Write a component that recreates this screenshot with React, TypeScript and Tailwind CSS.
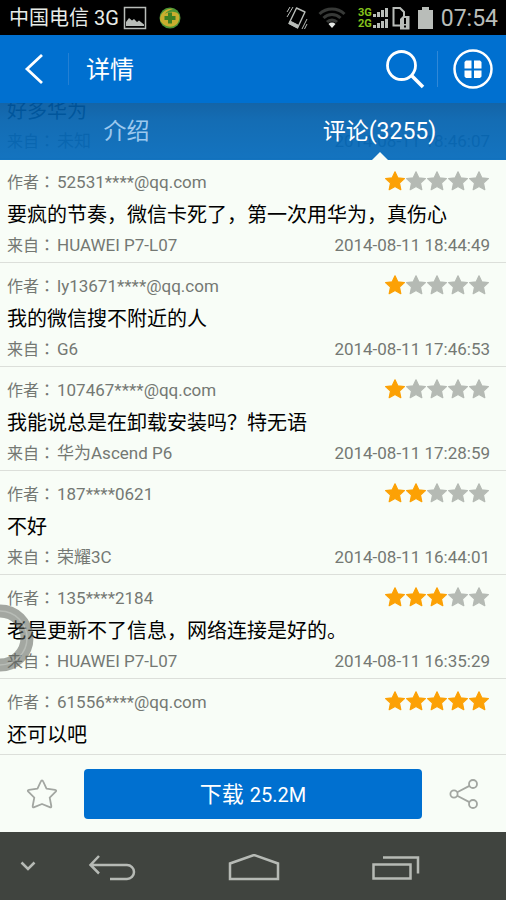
import { useState } from 'react';

interface Comment {
  author?: string;
  text: string;
  device?: string;
  time?: string;
  stars?: number;
}

const comments: Comment[] = [
  { text: '好多华为', device: '未知', time: '2014-08-11 18:46:07' },
  { author: '52531****@qq.com', text: '要疯的节奏，微信卡死了，第一次用华为，真伤心', device: 'HUAWEI P7-L07', time: '2014-08-11 18:44:49', stars: 1 },
  { author: 'ly13671****@qq.com', text: '我的微信搜不附近的人', device: 'G6', time: '2014-08-11 17:46:53', stars: 1 },
  { author: '107467****@qq.com', text: '我能说总是在卸载安装吗？特无语', device: '华为Ascend P6', time: '2014-08-11 17:28:59', stars: 1 },
  { author: '187****0621', text: '不好', device: '荣耀3C', time: '2014-08-11 16:44:01', stars: 2 },
  { author: '135****2184', text: '老是更新不了信息，网络连接是好的。', device: 'HUAWEI P7-L07', time: '2014-08-11 16:35:29', stars: 3 },
  { author: '61556****@qq.com', text: '还可以吧', stars: 5 },
];

const STAR = 'M10 0.8l2.8 6 6.6.8-4.9 4.5 1.3 6.6L10 15.5l-5.8 3.2 1.3-6.6L.6 7.6l6.6-.8z';

function Stars({ count }: { count: number }) {
  return (
    <div className="mr-px mb-0.5 flex gap-px" role="img" aria-label={`${count} / 5`}>
      {[1, 2, 3, 4, 5].map((n) => (
        <svg key={n} viewBox="0 0 20 20" className={n <= count ? 'size-5 text-[#fca105]' : 'size-5 text-[#b5bab4]'}>
          <path d={STAR} fill="currentColor" stroke="currentColor" strokeWidth="1.2" strokeLinejoin="round" />
        </svg>
      ))}
    </div>
  );
}

function Label({ children }: { children: string }) {
  return <span className="mr-0.5 font-['Noto_Sans_CJK_TC',sans-serif] text-base leading-none">{children}</span>;
}

function CommentRow({ comment }: { comment: Comment }) {
  return (
    <li className="border-b border-[#dcdfda] pr-4 pb-1.5 pl-[7px] text-[17px] text-[#747873]">
      {comment.author && (
        <div className="flex h-9 items-center justify-between pt-2.5">
          <p className="leading-6">
            <Label>作者：</Label>
            {comment.author}
          </p>
          <Stars count={comment.stars ?? 0} />
        </div>
      )}
      <p className="truncate text-xl leading-10 text-black">{comment.text}</p>
      {comment.time && (
        <div className="flex justify-between leading-[21px]">
          <p>
            <Label>来自：</Label>
            {comment.device}
          </p>
          <time>{comment.time}</time>
        </div>
      )}
    </li>
  );
}

function StatusBar() {
  return (
    <div className="flex h-[35px] shrink-0 items-center justify-between bg-black pr-2 pl-[9px] text-[#b9bdb9]">
      <div className="flex items-center">
        <span className="text-xl leading-none text-[#e8ece8]">中国电信 3G</span>
        <svg viewBox="0 0 24 24" className="ml-1 size-6" fill="none">
          <rect x="1.5" y="1.5" width="21" height="21" stroke="currentColor" strokeWidth="1.5" />
          <path d="M3 20v-4l3-4 3 2.500 2-1.500 3 3 2-1.500 5 4v1.500z" fill="currentColor" />
        </svg>
        <svg viewBox="0 0 22 22" className="ml-3 size-[22px]">
          <circle cx="11" cy="11" r="10.5" fill="#4a9436" />
          <path d="M1 13C1 5 8 1 14 2c-4 1-7 3-8 5 4-3 12-3 14 1 1 3 0 6-2 9-4 4-13 4-17-4z" fill="#c9ae2e" />
          <path d="M9 5.500h4v3.500h3.500v4H13v3.500H9V13H5.500V9H9z" fill="#3c8022" />
        </svg>
      </div>
      <div className="flex items-center">
        <svg viewBox="0 0 22 24" className="h-6 w-[22px]" fill="none" stroke="currentColor">
          <path d="M10.500 2l8.500 4-7.500 16L3 17.500z" strokeWidth="1.4" strokeLinejoin="round" />
          <path d="M3 17.500l8.500 4.300 1-2.500-8.300-4.200z" fill="currentColor" />
          <path d="M7 1L1 11M4 1L1 6M21 13l-5 10M21 18l-2.500 5" strokeWidth="1" />
        </svg>
        <svg viewBox="0 0 28 22" className="ml-2.5 h-[22px] w-7" fill="none" stroke="#373937" strokeWidth="3">
          <path d="M1.500 7a18 18 0 0 1 25 0M5.500 11a12 12 0 0 1 17 0M9 15a7 7 0 0 1 10 0" />
          <path d="M14 21l-3.500-4a5 5 0 0 1 7 0z" fill="#e4e7e4" stroke="none" />
        </svg>
        <div className="ml-3 flex flex-col text-[11px] leading-[11px] font-bold text-[#84c21c]">
          <span>3G</span>
          <span>2G</span>
        </div>
        <svg viewBox="0 0 16 22" className="h-[22px] w-4" fill="currentColor">
          <path d="M1 7h3v3H1zM5 5h3v5H5zM9 3h3v7H9zM13 1h3v9h-3zM1 18h3v3H1zM5 16h3v5H5zM9 14h3v7H9zM13 12h3v9h-3z" />
        </svg>
        <svg viewBox="0 0 18 24" className="ml-1 h-6 w-[18px]" fill="none">
          <path d="M8 19.500H1.500V2H8l4 4v4" stroke="currentColor" strokeWidth="2" />
          <path d="M8 13l3-3h6.500v13.500H8z" fill="currentColor" />
          <path d="M13 12v6M13 19.500v2" stroke="#000" strokeWidth="2" />
        </svg>
        <svg viewBox="0 0 15 22" className="ml-2 h-[22px] w-[15px]" fill="currentColor">
          <path d="M0 3h4V0h7v3h4v19H0z" />
        </svg>
        <span className="ml-2 pt-0.5 text-[23px] leading-none">07:54</span>
      </div>
    </div>
  );
}

function Header() {
  return (
    <header className="flex h-[68px] shrink-0 items-center justify-between bg-[#0070d0] px-3 text-white">
      <div className="flex items-center">
        <button aria-label="返回" className="flex w-11 justify-center">
          <svg viewBox="0 0 20 32" className="h-8 w-5" fill="none" stroke="currentColor" strokeWidth="2.800">
            <path d="M18 2L3 16l15 14" />
          </svg>
        </button>
        <span className="ml-3 h-8 w-px bg-[#2380d4]" />
        <h1 className="ml-[17px] pt-0.5 text-2xl">详情</h1>
      </div>
      <div className="flex items-center">
        <button aria-label="搜索">
          <svg viewBox="0 0 40 40" className="size-10" fill="none" stroke="currentColor" strokeWidth="2.800">
            <circle cx="16.500" cy="16.500" r="14" />
            <path d="M26.500 26.500L38 38" strokeWidth="3.500" />
          </svg>
        </button>
        <span className="ml-3 h-9 w-px bg-[#2f88d8]" />
        <button aria-label="菜单" className="ml-3.5">
          <svg viewBox="0 0 42 42" className="size-[42px]">
            <circle cx="21" cy="21" r="18.500" fill="none" stroke="currentColor" strokeWidth="2.500" />
            <path
              d="M14 12.500h5.500v8h-7v-6.500zM22 12.500h6l1.500 1.500v6.500H22zM12.500 22.500h7V30H14l-1.500-1.500zM22 22.500h7.500v6L28 30h-6z"
              fill="currentColor"
            />
          </svg>
        </button>
      </div>
    </header>
  );
}

const tabs = ['介绍', '评论(3255)'];

function Tabs() {
  const [active, setActive] = useState(1);
  return (
    <nav className="absolute inset-x-0 top-0 z-10 grid h-[57px] grid-cols-2 bg-linear-to-b from-[#0057a0]/92 via-[#0060ae]/92 via-30% to-[#0068bb]/92">
      {tabs.map((tab, i) => (
        <button
          key={tab}
          onClick={() => setActive(i)}
          className={i === active ? 'relative pt-0.5 text-[23px] text-white' : 'relative pt-0.5 text-[23px] text-[#9cc8ee]'}
        >
          {tab}
          {i === active && (
            <svg viewBox="0 0 16 8" className="absolute bottom-0 left-1/2 h-2 w-4 -translate-x-1/2">
              <path d="M0 8l8-8 8 8z" fill="#f8fdf7" />
            </svg>
          )}
        </button>
      ))}
    </nav>
  );
}

function ActionBar() {
  return (
    <div className="flex h-[78px] shrink-0 items-center border-t border-[#dcdfda] bg-[#f8fdf7] text-[#a2a6a1]">
      <button aria-label="收藏" className="flex w-[84px] justify-center">
        <svg viewBox="0 0 32 32" className="size-8" fill="none" stroke="currentColor" strokeWidth="1.800" strokeLinejoin="round">
          <path d="M16 2.500q.8 0 1.200 1l3.300 7.200 8.500 1.100q2 .4.700 1.900l-6 5.900 1.600 8.400q.2 2-1.600 1.200L16 26l-7.700 3.200q-1.800.8-1.600-1.200l1.600-8.400-6-5.900Q1 12.200 3 11.800l8.500-1.100 3.300-7.200q.4-1 1.200-1z" />
        </svg>
      </button>
      <button className="flex h-[50px] flex-1 items-center justify-center gap-1.5 rounded-sm bg-[#0070d0] pt-0.5 text-[22px] text-white">
        下载 <span className="text-xl">25.2M</span>
      </button>
      <button aria-label="分享" className="flex w-[84px] justify-center">
        <svg viewBox="0 0 32 32" className="size-8" fill="none" stroke="currentColor" strokeWidth="1.800">
          <circle cx="6" cy="16" r="3.600" />
          <circle cx="25" cy="6" r="4" />
          <circle cx="25" cy="26" r="4" />
          <path d="M9.200 14.300L21.400 7.900M9.200 17.700l12.200 6.400" />
        </svg>
      </button>
    </div>
  );
}

function NavBar() {
  return (
    <div className="flex h-[68px] shrink-0 items-center bg-[#40443f] text-[#b6bab5]">
      <button aria-label="收起" className="flex w-14 justify-center">
        <svg viewBox="0 0 16 10" className="h-2.5 w-4" fill="none" stroke="currentColor" strokeWidth="2.500">
          <path d="M1.500 1.500L8 8l6.500-6.500" />
        </svg>
      </button>
      <div className="flex flex-1 justify-between pt-1 pr-[86px] pl-8">
        <button aria-label="后退">
          <svg viewBox="0 0 48 28" className="h-7 w-12" fill="none" stroke="currentColor" strokeWidth="2.500">
            <path d="M11 2L2.500 11 11 19.500M2.500 11H39a7 7 0 0 1 0 14H22" />
          </svg>
        </button>
        <button aria-label="主页">
          <svg viewBox="0 0 52 28" className="h-7 w-[52px]" fill="none" stroke="currentColor" strokeWidth="2.500">
            <path d="M2 25V9.500L26 1l24 8.500V25z" />
          </svg>
        </button>
        <button aria-label="最近任务">
          <svg viewBox="0 0 48 28" className="h-7 w-12" fill="none" stroke="currentColor" strokeWidth="2.500">
            <path d="M1.500 10.500h37v14h-37zM11 3.500h35v16" />
          </svg>
        </button>
      </div>
    </div>
  );
}

export default function App() {
  return (
    <div className="flex h-screen flex-col overflow-hidden bg-[#f8fdf7] font-[Roboto,'Noto_Sans_CJK_SC',sans-serif]">
      <StatusBar />
      <Header />
      <main className="relative min-h-0 flex-1 overflow-hidden">
        <Tabs />
        <ul className="-mt-3">
          {comments.map((c) => (
            <CommentRow key={c.text} comment={c} />
          ))}
        </ul>
        <svg viewBox="0 0 34 68" className="absolute top-[501px] left-0 h-[68px] w-[34px]" fill="none">
          <circle cx="0" cy="34" r="27" stroke="#5c605b" strokeOpacity="0.55" strokeWidth="13" />
          <circle cx="0" cy="34" r="27" stroke="#d8dcd7" strokeOpacity="0.4" strokeWidth="1.500" />
        </svg>
      </main>
      <ActionBar />
      <NavBar />
    </div>
  );
}
